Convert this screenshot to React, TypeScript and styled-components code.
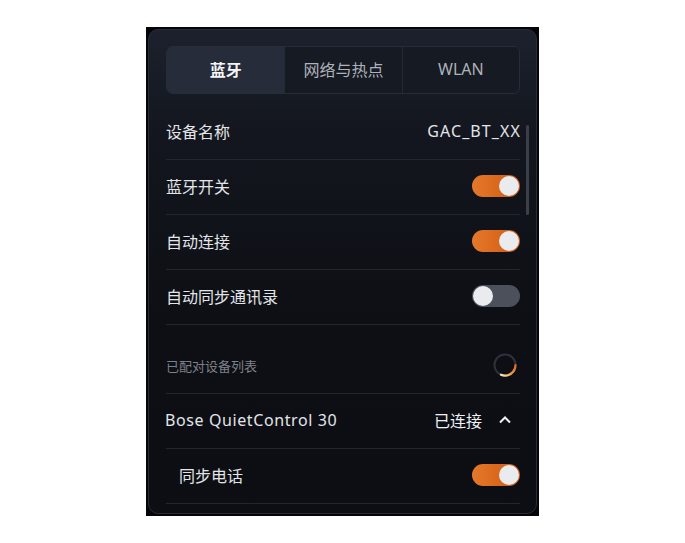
import { useState } from "react";
import styled, { createGlobalStyle, keyframes } from "styled-components";

const GlobalStyle = createGlobalStyle`
  html, body {
    margin: 0;
    padding: 0;
    background: #ffffff;
  }
  body {
    font-family: "Noto Sans", "Noto Sans CJK SC", sans-serif;
  }
`;

const tabs = ["蓝牙", "网络与热点", "WLAN"];

export default function App() {
  const [active, setActive] = useState(0);
  const [bt, setBt] = useState(true);
  const [auto, setAuto] = useState(true);
  const [sync, setSync] = useState(false);
  const [phone, setPhone] = useState(true);

  return (
    <>
      <GlobalStyle />
      <Frame>
        <Panel>
          <Tabs>
            {tabs.map((t, i) => (
              <Tab key={t} $active={i === active} onClick={() => setActive(i)}>
                {t}
              </Tab>
            ))}
          </Tabs>

          <List>
            <Row>
              <Label>设备名称</Label>
              <Value>GAC_BT_XX</Value>
            </Row>
            <Row>
              <Label>蓝牙开关</Label>
              <Switch $on={bt} onClick={() => setBt(!bt)} />
            </Row>
            <Row>
              <Label>自动连接</Label>
              <Switch $on={auto} onClick={() => setAuto(!auto)} />
            </Row>
            <Row>
              <Label>自动同步通讯录</Label>
              <Switch $on={sync} onClick={() => setSync(!sync)} />
            </Row>
            <SectionRow>
              <SectionLabel>已配对设备列表</SectionLabel>
              <Spinner viewBox="0 0 24 24">
                <circle cx="12" cy="12" r="10.5" fill="none" stroke="#2c313b" strokeWidth="2" />
                <path
                  d="M22.5 12 A10.5 10.5 0 0 1 8 21.7"
                  fill="none"
                  stroke="url(#spin)"
                  strokeWidth="2.2"
                  strokeLinecap="round"
                />
                <defs>
                  <linearGradient id="spin" x1="1" y1="0" x2="0" y2="1">
                    <stop offset="0" stopColor="#e0671c" />
                    <stop offset="0.6" stopColor="#f2a33a" />
                    <stop offset="1" stopColor="#f6e6c8" />
                  </linearGradient>
                </defs>
              </Spinner>
            </SectionRow>
            <Row>
              <DeviceName>Bose QuietControl 30</DeviceName>
              <Status>
                已连接
                <svg width="14" height="10" viewBox="0 0 14 10">
                  <path d="M2 7.5 L7 2.5 L12 7.5" fill="none" stroke="#eef0f3" strokeWidth="2" />
                </svg>
              </Status>
            </Row>
            <Row $indent>
              <Label>同步电话</Label>
              <Switch $on={phone} onClick={() => setPhone(!phone)} />
            </Row>
          </List>

          <ScrollThumb />
        </Panel>
      </Frame>
    </>
  );
}

const Frame = styled.div`
  margin: 27px 0 0 146px;
  width: 393px;
  height: 489px;
  background: #050507;
  padding: 2px;
  box-sizing: border-box;
`;

const Panel = styled.div`
  position: relative;
  height: 100%;
  box-sizing: border-box;
  border: 1px solid #272c37;
  border-radius: 10px;
  overflow: hidden;
  padding: 16px 16px 0 17px;
  background: linear-gradient(180deg, #1c212d 0%, #13161e 22%, #0d0f14 60%, #0c0e13 100%);
`;

const Tabs = styled.div`
  display: grid;
  grid-template-columns: repeat(3, 1fr);
  height: 46px;
  border: 1px solid #272c36;
  border-radius: 6px;
  overflow: hidden;
  background: #161a22;
`;

const Tab = styled.div<{ $active?: boolean }>`
  display: flex;
  align-items: center;
  justify-content: center;
  padding-bottom: 2px;
  font-size: 16px;
  cursor: pointer;
  color: ${({ $active }) => ($active ? "#f4f5f7" : "#aeb2ba")};
  font-weight: ${({ $active }) => ($active ? 700 : 400)};
  background: ${({ $active }) => ($active ? "#262c39" : "transparent")};
  border-left: 1px solid #242933;

  &:first-child {
    border-left: none;
  }
`;

const List = styled.div`
  margin-top: 11px;
  display: flex;
  flex-direction: column;
`;

const Row = styled.div<{ $indent?: boolean }>`
  display: flex;
  align-items: center;
  justify-content: space-between;
  height: 55px;
  box-sizing: border-box;
  padding-left: ${({ $indent }) => ($indent ? "13px" : "0")};
  padding-bottom: 2px;
  border-bottom: 1px solid #22262f;
`;

const SectionRow = styled(Row)`
  height: 69px;
  padding-top: 12px;
  padding-bottom: 0;
  border-bottom-color: #1f2630;
`;

const Label = styled.span`
  font-size: 16px;
  color: #e3e5e9;
  font-family: "Noto Sans CJK SC", "Noto Sans", sans-serif;
`;

const SectionLabel = styled.span`
  font-size: 13px;
  color: #7d818a;
  font-family: "Noto Sans CJK SC", "Noto Sans", sans-serif;
`;

const Value = styled.span`
  font-size: 16px;
  letter-spacing: 1.1px;
  margin-right: -1px;
  color: #e3e5e9;
`;

const DeviceName = styled.span`
  font-size: 16px;
  letter-spacing: 0.6px;
  margin-left: -1px;
  color: #e3e5e9;
`;

const Status = styled.span`
  display: flex;
  align-items: center;
  gap: 16px;
  padding-right: 8px;
  font-size: 16px;
  color: #eef0f3;
  font-family: "Noto Sans CJK SC", "Noto Sans", sans-serif;
`;

const Switch = styled.div<{ $on?: boolean }>`
  position: relative;
  width: 48px;
  height: 22px;
  border-radius: 11px;
  cursor: pointer;
  background: ${({ $on }) =>
    $on ? "linear-gradient(90deg, #e5782a 0%, #d8661c 60%, #c9581a 100%)" : "#4b505b"};

  &::after {
    content: "";
    position: absolute;
    top: 1px;
    left: ${({ $on }) => ($on ? "27px" : "1px")};
    width: 20px;
    height: 20px;
    border-radius: 50%;
    background: #e9ebef;
  }
`;

const spin = keyframes`
  from { transform: rotate(0deg); }
  to { transform: rotate(360deg); }
`;

const Spinner = styled.svg`
  width: 24px;
  height: 24px;
  margin-right: 3px;
  animation: ${spin} 1.2s linear infinite;
  animation-play-state: paused;
`;

const ScrollThumb = styled.div`
  position: absolute;
  top: 95px;
  right: 7px;
  width: 3px;
  height: 90px;
  border-radius: 2px;
  background: #3a3f49;
`;
